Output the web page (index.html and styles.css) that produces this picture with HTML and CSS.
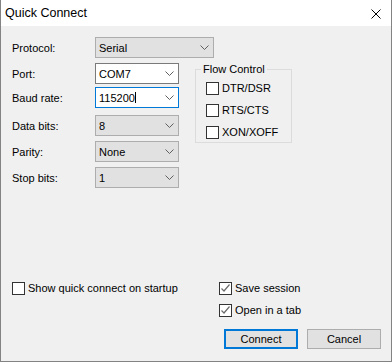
FILE: index.html
```html
<!DOCTYPE html>
<html>
<head>
<meta charset="utf-8">
<link rel="stylesheet" href="styles.css">
</head>
<body>
<div class="window">
  <div class="titlebar">
    <span class="title">Quick Connect</span>
    <svg class="close" width="10" height="10" viewBox="0 0 10 10"><path d="M0.5 0.5 L9.5 9.5 M9.5 0.5 L0.5 9.5" stroke="#000" stroke-width="1" fill="none"/></svg>
  </div>
  <div class="content">
    <div class="row">
      <span class="lbl">Protocol:</span>
      <div class="combo combo-ro combo-wide"><span class="val">Serial</span><svg class="chev" width="9" height="5" viewBox="0 0 9 5"><path d="M0.5 0.5 L4.5 4.5 L8.5 0.5" stroke="#606060" fill="none"/></svg></div>
    </div>
    <div class="main">
      <div class="fields">
        <div class="row row-port">
          <span class="lbl">Port:</span>
          <div class="combo combo-edit"><span class="val">COM7</span><svg class="chev" width="9" height="5" viewBox="0 0 9 5"><path d="M0.5 0.5 L4.5 4.5 L8.5 0.5" stroke="#606060" fill="none"/></svg></div>
        </div>
        <div class="row row-baud">
          <span class="lbl">Baud rate:</span>
          <div class="combo combo-edit combo-focus"><span class="val">115200<span class="caret"></span></span><svg class="chev" width="9" height="5" viewBox="0 0 9 5"><path d="M0.5 0.5 L4.5 4.5 L8.5 0.5" stroke="#606060" fill="none"/></svg></div>
        </div>
        <div class="row row-data">
          <span class="lbl">Data bits:</span>
          <div class="combo combo-ro"><span class="val">8</span><svg class="chev" width="9" height="5" viewBox="0 0 9 5"><path d="M0.5 0.5 L4.5 4.5 L8.5 0.5" stroke="#606060" fill="none"/></svg></div>
        </div>
        <div class="row row-next">
          <span class="lbl">Parity:</span>
          <div class="combo combo-ro"><span class="val">None</span><svg class="chev" width="9" height="5" viewBox="0 0 9 5"><path d="M0.5 0.5 L4.5 4.5 L8.5 0.5" stroke="#606060" fill="none"/></svg></div>
        </div>
        <div class="row row-next">
          <span class="lbl">Stop bits:</span>
          <div class="combo combo-ro"><span class="val">1</span><svg class="chev" width="9" height="5" viewBox="0 0 9 5"><path d="M0.5 0.5 L4.5 4.5 L8.5 0.5" stroke="#606060" fill="none"/></svg></div>
        </div>
      </div>
      <fieldset class="group">
        <legend>Flow Control</legend>
        <div class="check"><span class="box"></span><span>DTR/DSR</span></div>
        <div class="check"><span class="box"></span><span>RTS/CTS</span></div>
        <div class="check"><span class="box"></span><span>XON/XOFF</span></div>
      </fieldset>
    </div>
    <div class="options">
      <div class="opt-col">
        <div class="check"><span class="box"></span><span>Show quick connect on startup</span></div>
      </div>
      <div class="opt-col">
        <div class="check"><span class="box"><svg width="11" height="11" viewBox="0 0 11 11"><path d="M1.5 5.5 L4 8 L9.5 1.5" stroke="#6b6b6b" stroke-width="1.2" fill="none"/></svg></span><span>Save session</span></div>
        <div class="check"><span class="box"><svg width="11" height="11" viewBox="0 0 11 11"><path d="M1.5 5.5 L4 8 L9.5 1.5" stroke="#6b6b6b" stroke-width="1.2" fill="none"/></svg></span><span>Open in a tab</span></div>
      </div>
    </div>
    <div class="buttons">
      <div class="btn btn-default">Connect</div>
      <div class="btn">Cancel</div>
    </div>
  </div>
</div>
</body>
</html>
```

FILE: styles.css
```css
* { box-sizing: border-box; }
html, body { margin: 0; padding: 0; }
body {
  font-family: "Liberation Sans", Arial, sans-serif;
  font-size: 11px;
  color: #000;
  background: #f0f0f0;
}
.window {
  width: 392px;
  height: 362px;
  background: #f0f0f0;
  border: 1px solid #838383;
  border-top: none;
  display: flex;
  flex-direction: column;
}
.titlebar {
  height: 26px;
  background: #fff;
  display: flex;
  align-items: center;
  justify-content: space-between;
  padding: 0 10px 0 4px;
  margin: 0 -1px 0 -1px;
  border-left: 1px solid #838383;
  border-right: 1px solid #838383;
}
.title { font-size: 12.5px; line-height: 16px; }
.close { display: block; margin-top: 1px; }
.content {
  padding: 11px 10px 0 11px;
  display: flex;
  flex-direction: column;
}
.row {
  display: flex;
  align-items: center;
  height: 21px;
}
.lbl { width: 83px; flex: none; line-height: 16px; }
.row-port { margin-top: 5px; }
.row-baud { margin-top: 3px; }
.row-data { margin-top: 7px; }
.row-next { margin-top: 5px; }
.combo {
  width: 84px;
  height: 21px;
  display: flex;
  align-items: center;
  justify-content: space-between;
  padding: 0 4px 0 3px;
  border: 1px solid #adadad;
  line-height: 16px;
}
.combo-wide { width: 119px; }
.combo-ro { background: #e1e1e1; }
.combo-edit { background: #fff; border-color: #7a7a7a; }
.combo-focus { border-color: #0078d7; }
.val { display: flex; align-items: center; }
.caret { display: inline-block; width: 1px; height: 11px; background: #000; margin-left: 0; }
.chev { display: block; flex: none; }
.main {
  display: flex;
  gap: 16px;
  align-items: flex-start;
}
.fields { width: 167px; flex: none; }
.group {
  margin: 3px 0 0 0;
  width: 97px;
  border: 1px solid #dcdcdc;
  padding: 4px 4px 2px 10px;
  display: flex;
  flex-direction: column;
  gap: 7px;
}
.group legend {
  padding: 0 2px;
  margin-left: -5px;
  line-height: 16px;
}
.check {
  display: flex;
  align-items: center;
  height: 15px;
  gap: 3px;
  line-height: 15px;
  white-space: nowrap;
}
.box {
  width: 13px;
  height: 13px;
  flex: none;
  border: 1px solid #333;
  background: #fff;
  display: flex;
  align-items: center;
  justify-content: center;
}
.box svg { display: block; }
.options {
  margin-top: 93px;
  display: grid;
  grid-template-columns: 207px auto;
}
.opt-col { display: flex; flex-direction: column; gap: 7px; }
.buttons {
  margin-top: 11px;
  display: flex;
  justify-content: flex-end;
  gap: 9px;
}
.btn {
  width: 74px;
  height: 20px;
  background: #e1e1e1;
  border: 1px solid #adadad;
  display: flex;
  align-items: center;
  justify-content: center;
  line-height: 16px;
}
.btn-default { border: 2px solid #0078d7; }
```
